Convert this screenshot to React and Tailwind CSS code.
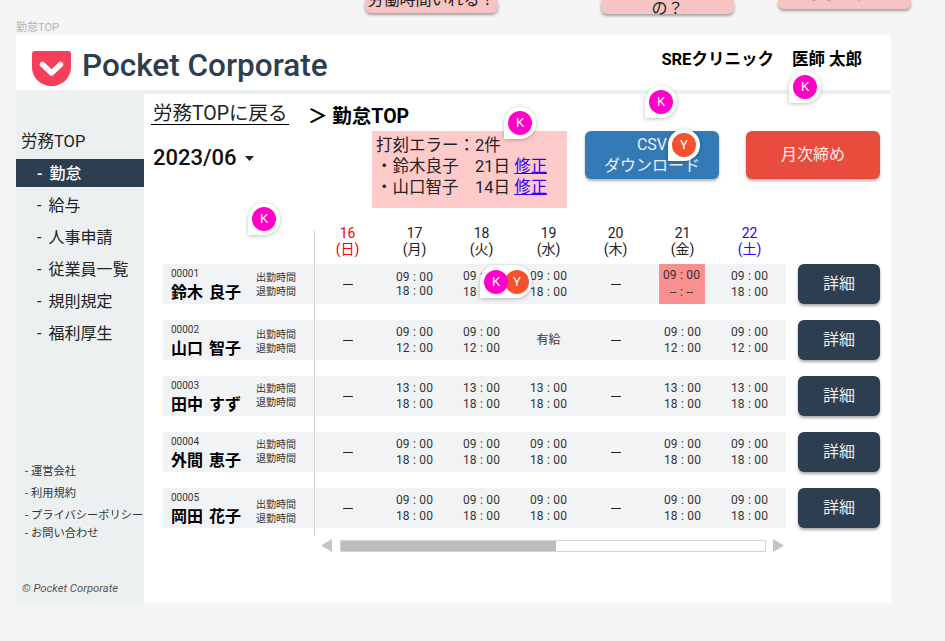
const FONT = "font-['Roboto','Noto_Sans_CJK_JP',sans-serif]";
const days = [
  { d: "16", w: "(日)", c: "text-[#ff0000]" },
  { d: "17", w: "(月)", c: "text-[#222]" },
  { d: "18", w: "(火)", c: "text-[#222]" },
  { d: "19", w: "(水)", c: "text-[#222]" },
  { d: "20", w: "(木)", c: "text-[#222]" },
  { d: "21", w: "(金)", c: "text-[#222]" },
  { d: "22", w: "(土)", c: "text-[#3300ff]" },
];

const rows = [
  { id: "00001", name: "鈴木 良子", labels: "pt-[7px]", cells: ["-", ["09 : 00", "18 : 00", "tight"], ["09 : 00", "18 : 00"], ["09 : 00", "18 : 00"], "-", "err", ["09 : 00", "18 : 00"]] },
  { id: "00002", name: "山口 智子", labels: "pt-[8px]", cells: ["-", ["09 : 00", "12 : 00"], ["09 : 00", "12 : 00"], "有給", "-", ["09 : 00", "12 : 00"], ["09 : 00", "12 : 00"]] },
  { id: "00003", name: "田中 すず", labels: "pt-[6px]", cells: ["-", ["13 : 00", "18 : 00"], ["13 : 00", "18 : 00"], ["13 : 00", "18 : 00"], "-", ["13 : 00", "18 : 00"], ["13 : 00", "18 : 00"]] },
  { id: "00004", name: "外間 恵子", labels: "pt-[6px]", cells: ["-", ["09 : 00", "18 : 00"], ["09 : 00", "18 : 00"], ["09 : 00", "18 : 00"], "-", ["09 : 00", "18 : 00"], ["09 : 00", "18 : 00"]] },
  { id: "00005", name: "岡田 花子", labels: "pt-[10px]", cells: ["-", ["09 : 00", "18 : 00"], ["09 : 00", "18 : 00"], ["09 : 00", "18 : 00"], "-", ["09 : 00", "18 : 00"], ["09 : 00", "18 : 00"]] },
];

function Note({ className, textClass, text }) {
  return (
    <div className={`absolute top-0 flex w-[133px] items-end justify-center rounded-b-md bg-[#f6c4c3] text-[16px] leading-[16px] text-[#222] shadow-[0_2px_3px_rgba(0,0,0,0.35)] ${className}`}>
      <span className={`whitespace-nowrap ${textClass}`}>{text}</span>
    </div>
  );
}

function Pin({ className, letter, color }) {
  return (
    <div className={`absolute flex h-8 w-8 items-center justify-center rounded-full rounded-bl-none bg-white shadow-[0_1px_4px_rgba(0,0,0,0.25)] ${className}`}>
      <span className={`flex h-6 w-6 items-center justify-center rounded-full text-[13px] text-white ${color}`}>{letter}</span>
    </div>
  );
}

function Cell({ value }) {
  if (value === "-") {
    return <div className="flex w-[67px] items-center justify-center"><span className="h-px w-[10px] bg-[#222]" /></div>;
  }
  if (value === "err") {
    return (
      <div className="flex w-[67px] items-center justify-center">
        <div className="-ml-[2px] flex h-10 w-[46px] flex-col items-center justify-center bg-[#fa8f8f] text-[12px] leading-[17px] tracking-[0.2px] text-[#333]">
          <span>09 : 00</span>
          <span>-- : --</span>
        </div>
      </div>
    );
  }
  if (typeof value === "string") {
    return <div className="flex w-[67px] items-center justify-center text-[12px] text-[#333]">{value}</div>;
  }
  return (
    <div className={`flex w-[67px] flex-col items-center justify-center text-[12px] tracking-[0.2px] text-[#333] ${value[2] ? "leading-[14px]" : "leading-[16px]"}`}>
      <span>{value[0]}</span>
      <span>{value[1]}</span>
    </div>
  );
}

export default function App() {
  return (
    <div className={`relative h-[641px] w-[945px] overflow-hidden bg-[#f5f5f5] pl-4 pt-5 ${FONT}`}>
      <Note className="left-[365px] h-[13px]" textClass="mb-[5px]" text="労働時間いれる？" />
      <Note className="left-[601px] h-[14px]" textClass="-mb-[3px]" text="の？" />
      <Note className="left-[778px] h-[9px]" textClass="mb-[7px]" text="かもしれません" />

      <div className="h-[15px] text-[11px] leading-[15px] text-[#b5b5b5]">勤怠TOP</div>

      <div className="w-[875px] bg-white">
        <header className="flex h-[55px] items-start justify-between pl-4 pr-[29px]">
          <div className="flex items-start gap-[11px] pt-4">
            <svg width="39" height="35" viewBox="0 0 39 35">
              <path d="M3 0H36a3 3 0 0 1 3 3V16C39 27 30 35 19.5 35S0 27 0 16V3a3 3 0 0 1 3-3Z" fill="#f43e5c" />
              <path d="M10.5 13.5L19.5 22L28.5 13.5" fill="none" stroke="#fff" strokeWidth="5.5" strokeLinecap="round" strokeLinejoin="round" />
            </svg>
            <span className="text-[31.5px] font-medium leading-[30px] text-[#2c3e50]">Pocket Corporate</span>
          </div>
          <div className="flex gap-[18px] pt-[13px] text-[16.5px] font-bold leading-[24px] text-black">
            <span>SREクリニック</span>
            <span>医師 太郎</span>
          </div>
        </header>
        <div className="h-1 bg-[#ecf0f1]" />

        <div className="flex h-[509px]">
          <aside className="flex w-[128px] flex-col bg-[#ecf0f1]">
            <div className="mt-9 pl-[5px] text-[16.5px] leading-[24px] text-[#222]">労務TOP</div>
            <nav className="mt-[5px] flex flex-col [word-spacing:3px]">
              <div className="flex h-7 items-center bg-[#2c3e50] pl-[21px] pt-[2px] text-[16px] font-medium text-white">- 勤怠</div>
              {["給与", "人事申請", "従業員一覧", "規則規定", "福利厚生"].map((m) => (
                <div key={m} className="mt-1 flex h-7 items-center pl-[21px] pt-[2px] text-[16px] text-[#222]">- {m}</div>
              ))}
            </nav>
            <div className="mt-[114px] flex flex-col pl-[9px] text-[11.25px] text-[#333]">
              <span className="h-[22px] leading-[22px]">- 運営会社</span>
              <span className="h-[22px] leading-[22px]">- 利用規約</span>
              <span className="h-[18px] leading-[22px] whitespace-nowrap">- プライバシーポリシー</span>
              <span className="h-[22px] leading-[22px]">- お問い合わせ</span>
            </div>
            <div className="mt-[37px] pl-[6px] text-[11.3px] italic leading-[14px] text-[#555]">© Pocket Corporate</div>
          </aside>

          <main className="flex-1">
            <div className="flex h-[37px] items-start pl-[7px]">
              <span className="mt-[10px] w-[138px] whitespace-nowrap border-b border-black pl-[2px] text-[19.5px] leading-[20px] text-[#222]">労務TOPに戻る</span>
              <span className="ml-[19px] mt-[11px] text-[19.5px] font-bold leading-[24px] text-black">＞ 勤怠TOP</span>
            </div>

            <div className="flex items-start pl-[9px]">
              <div className="mt-[13px] flex w-[219px] items-center gap-2 text-[22px] font-medium leading-[28px] text-[#111]">
                2023/06
                <svg width="9" height="5" viewBox="0 0 9 5"><path d="M0 0H9L4.5 5Z" fill="#222" /></svg>
              </div>
              <div className="h-[77px] w-[195px] bg-[#ffcaca] pl-1 pt-1 text-[16.5px] leading-[21px] whitespace-nowrap text-[#222]">
                <div>打刻エラー：2件</div>
                <div>・鈴木良子　21日 <span className="text-[#3300ff] underline">修正</span></div>
                <div>・山口智子　14日 <span className="text-[#3300ff] underline">修正</span></div>
              </div>
              <button className="ml-[18px] flex h-12 w-[134px] items-center justify-center rounded-md bg-[#337ab7] text-center text-[16px] leading-[21px] text-white/90 shadow-[0_2px_3px_rgba(0,0,0,0.3)]">
                CSV<br />ダウンロード
              </button>
              <button className="ml-[27px] h-12 w-[134px] rounded-md bg-[#e74c3c] text-[16px] text-white/90 shadow-[0_2px_3px_rgba(0,0,0,0.3)]">月次締め</button>
            </div>

            <div className="relative mt-[17px] pl-[19px]">
              <div className="absolute left-[170px] top-[5px] h-[306px] w-px bg-[#d4d4d4]" />
              <div className="flex h-[39px] pl-[151px]">
                {days.map((x) => (
                  <div key={x.d} className={`w-[67px] text-center text-[14px] leading-[16px] ${x.c}`}>
                    <div>{x.d}</div>
                    <div>{x.w}</div>
                  </div>
                ))}
              </div>
              <div className="flex flex-col gap-4">
                {rows.map((r) => (
                  <div key={r.id} className="flex">
                    <div className="flex h-10 w-[623px] bg-[#f2f3f5]">
                      <div className="w-[93px] pl-2 pt-[3px] text-black">
                        <div className="text-[10px] leading-[14px] text-[#333]">{r.id}</div>
                        <div className="mt-[2px] text-[16px] font-bold leading-[20px] whitespace-nowrap [word-spacing:2px]">{r.name}</div>
                      </div>
                      <div className={`w-[58px] text-[10px] leading-[14px] text-[#333] ${r.labels}`}>
                        <div>出勤時間</div>
                        <div>退勤時間</div>
                      </div>
                      {r.cells.map((c, i) => <Cell key={i} value={c} />)}
                    </div>
                    <button className="ml-3 h-10 w-[82px] rounded-md bg-[#2c3e50] text-[16px] text-white/90 shadow-[0_2px_3px_rgba(0,0,0,0.35)]">詳細</button>
                  </div>
                ))}
              </div>
              <div className="ml-[158px] mt-[11px] flex items-center">
                <svg width="11" height="13" viewBox="0 0 11 13"><path d="M11 0V13L0 6.5Z" fill="#c4c4c4" /></svg>
                <div className="ml-2 flex h-3 w-[426px] border border-[#d4d4d4] bg-white">
                  <div className="w-[215px] bg-[#bdbdbd]" />
                </div>
                <svg width="11" height="13" viewBox="0 0 11 13" className="ml-[7px]"><path d="M0 0V13L11 6.5Z" fill="#c4c4c4" /></svg>
              </div>
            </div>
          </main>
        </div>
      </div>

      <Pin className="left-[789px] top-[71px]" letter="K" color="bg-[#ff00c8]" />
      <Pin className="left-[645px] top-[86px]" letter="K" color="bg-[#ff00c8]" />
      <Pin className="left-[504px] top-[107px]" letter="K" color="bg-[#ff00c8]" />
      <Pin className="left-[668px] top-[129px]" letter="Y" color="bg-[#f4522d]" />
      <Pin className="left-[248px] top-[203px]" letter="K" color="bg-[#ff00c8]" />
      <div className="absolute left-[480px] top-[265px] flex h-[33px] w-[52px] items-center rounded-full rounded-bl-none bg-white pl-[4px] shadow-[0_1px_4px_rgba(0,0,0,0.25)]">
        <span className="z-10 flex h-6 w-6 items-center justify-center rounded-full bg-[#ff00c8] text-[13px] text-white">K</span>
        <span className="-ml-[3px] flex h-6 w-6 items-center justify-center rounded-full bg-[#f4522d] text-[13px] text-white">Y</span>
      </div>
    </div>
  );
}
